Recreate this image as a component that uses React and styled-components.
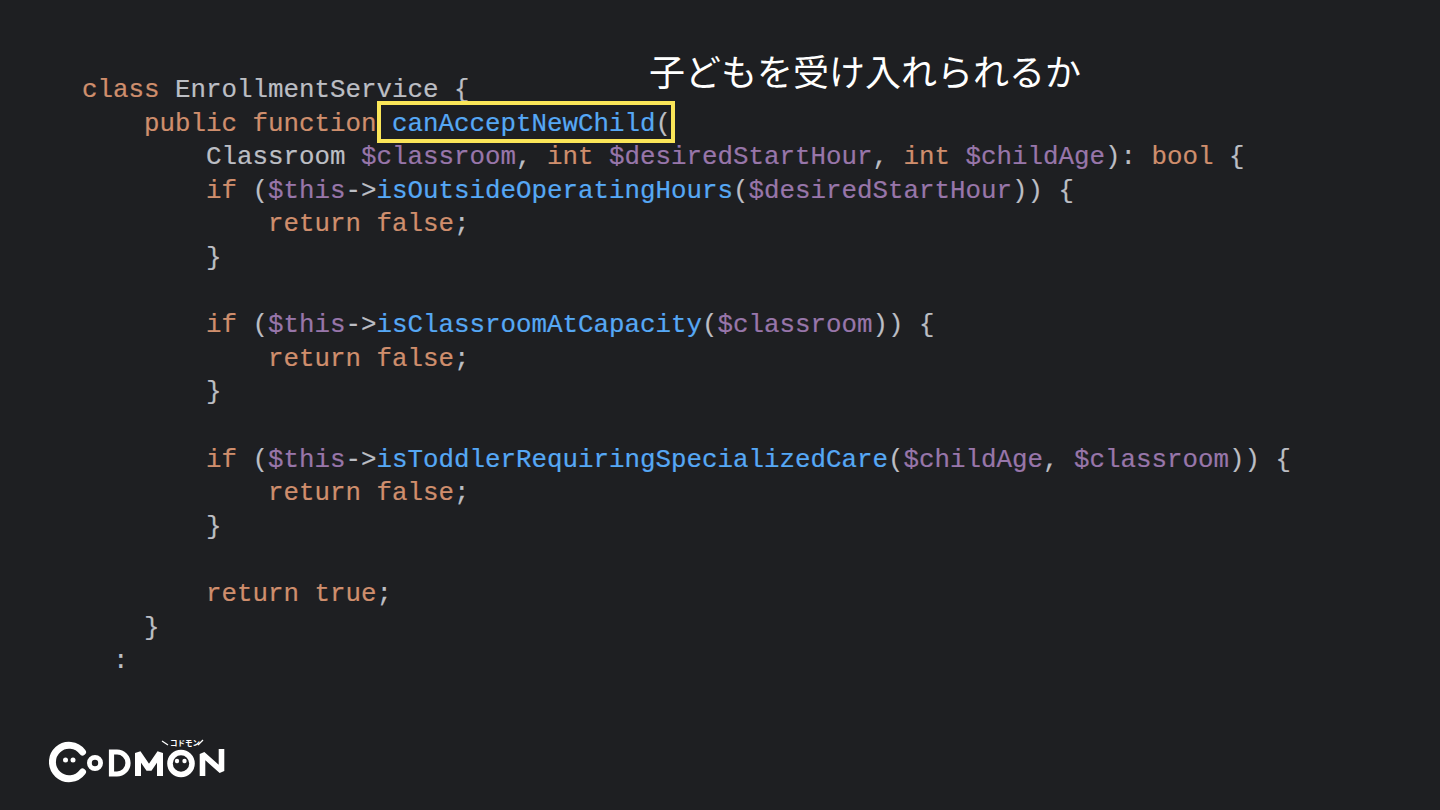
import React from "react";
import styled, { createGlobalStyle } from "styled-components";

const Global = createGlobalStyle`
  html, body { margin: 0; padding: 0; background: #1e1f22; }
`;
const Slide = styled.main`
  position: relative;
  width: 1440px;
  height: 810px;
  overflow: hidden;
  background: #1e1f22;
  display: flex;
  flex-direction: column;
  justify-content: space-between;
  box-sizing: border-box;
  padding: 74px 0 24px 49px;
`;
const Code = styled.pre`
  margin: 0 0 0 33px;
  font-family: "Liberation Mono", "DejaVu Sans Mono", monospace;
  font-size: 25.83px;
  line-height: 33.6px;
  color: #bcbec4;
  -webkit-text-stroke: 0.2px currentColor;
`;
const Line = styled.div`
  height: 33.6px;
  white-space: pre;
`;
const Kw = styled.span`color: #cf8e6d;`;
const Fn = styled.span`color: #56a8f5;`;
const Var = styled.span`color: #9876aa;`;
const Highlight = styled.span`
  position: relative;
  &::after {
    content: "";
    position: absolute;
    left: 0;
    right: -4px;
    top: -8px;
    bottom: -4px;
    border: 4px solid #fbe658;
    box-sizing: border-box;
  }
`;
const Note = styled.div`
  position: absolute;
  left: 649px;
  top: 48px;
  font-family: "Noto Sans CJK JP", sans-serif;
  font-size: 36px;
  line-height: 44px;
  letter-spacing: 0;
  color: #ffffff;
  white-space: nowrap;
`;
const LogoWrap = styled.div`
  width: 180px;
  height: 50px;
  line-height: 0;
`;
const LogoKana = styled.text`
  font-family: "Noto Sans CJK JP", sans-serif;
  font-size: 7.5px;
  font-weight: 700;
  fill: #fff;
`;

const Logo = () => (
  <LogoWrap>
    <svg width="180" height="50" viewBox="49 736 180 50" fill="none" stroke="#fff" strokeWidth="6">
      <path d="M82.5 752 A16.7 16.7 0 1 0 82.5 772" strokeWidth="7" strokeLinecap="round" />
      <circle cx="65.5" cy="760" r="2.5" fill="#fff" stroke="none" />
      <circle cx="73" cy="760" r="2.5" fill="#fff" stroke="none" />
      <circle cx="95" cy="763" r="5.6" strokeWidth="4.8" />
      <path d="M111.5 752 V774 H117 A11 11 0 0 0 117 752 Z" strokeWidth="5.2" />
      <path d="M138 776 V753 L149 769 L160 753 V776" strokeWidth="6" strokeLinejoin="bevel" />
      <circle cx="181" cy="763.5" r="11" strokeWidth="5.6" />
      <circle cx="177" cy="761" r="2.2" fill="#fff" stroke="none" />
      <circle cx="184.5" cy="761" r="2.2" fill="#fff" stroke="none" />
      <path d="M202.5 776 V754 L221.5 771 V749" strokeWidth="5.6" strokeLinejoin="bevel" />
      <path d="M162 741 L168 745 M203 740 L198 745" strokeWidth="1.3" />
      <LogoKana x="170" y="746" stroke="none">コドモン</LogoKana>
    </svg>
  </LogoWrap>
);

const If = ({ children }) => (
  <>
    <Line>{"        "}<Kw>if</Kw>{" ("}<Var>$this</Var>{"->"}{children}{") {"}</Line>
    <Line>{"            "}<Kw>return false</Kw>;</Line>
    <Line>{"        }"}</Line>
  </>
);

export default function App() {
  return (
    <Slide>
      <Global />
      <Code>
        <Line><Kw>class</Kw> EnrollmentService {"{"}</Line>
        <Line>{"    "}<Kw>public function</Kw><Highlight> <Fn>canAcceptNewChild</Fn>(</Highlight></Line>
        <Line>{"        "}Classroom <Var>$classroom</Var>, <Kw>int</Kw> <Var>$desiredStartHour</Var>, <Kw>int</Kw> <Var>$childAge</Var>): <Kw>bool</Kw> {"{"}</Line>
        <If><Fn>isOutsideOperatingHours</Fn>(<Var>$desiredStartHour</Var>)</If>
        <Line />
        <If><Fn>isClassroomAtCapacity</Fn>(<Var>$classroom</Var>)</If>
        <Line />
        <If><Fn>isToddlerRequiringSpecializedCare</Fn>(<Var>$childAge</Var>, <Var>$classroom</Var>)</If>
        <Line />
        <Line>{"        "}<Kw>return true</Kw>;</Line>
        <Line>{"    }"}</Line>
        <Line>{"  :"}</Line>
      </Code>
      <Logo />
      <Note>子どもを受け入れられるか</Note>
    </Slide>
  );
}
